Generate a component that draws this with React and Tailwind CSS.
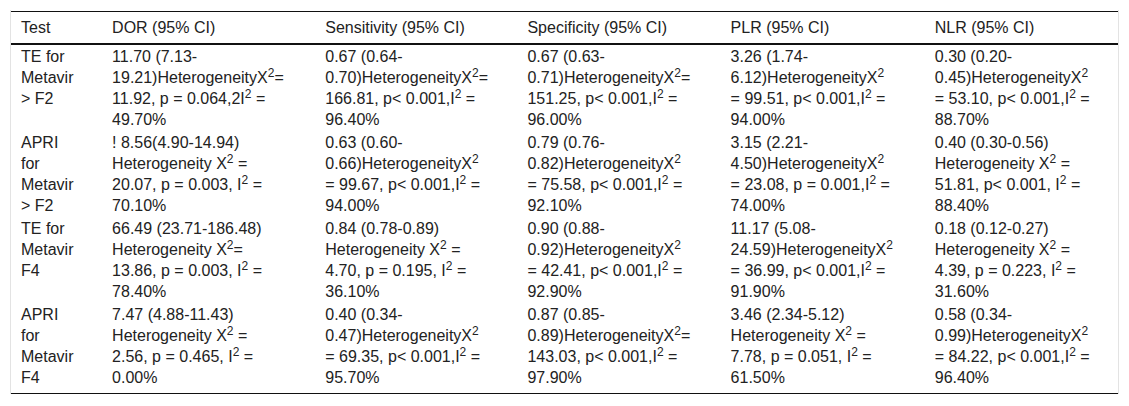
// Diagnostic accuracy table: meta-analysis results per test

const COLUMNS = [
  { label: "Test", width: "w-[91px]" },
  { label: "DOR (95% CI)", width: "w-[213px]" },
  { label: "Sensitivity (95% CI)", width: "w-[202px]" },
  { label: "Specificity (95% CI)", width: "w-[203px]" },
  { label: "PLR (95% CI)", width: "w-[204px]" },
  { label: "NLR (95% CI)", width: "w-[193px]" },
];

// each cell is a list of lines; "^2" becomes a superscript 2
const ROWS = [
  [
    ["TE for", "Metavir", "> F2"],
    ["11.70 (7.13-", "19.21)HeterogeneityX^2=", "11.92, p = 0.064,2I^2 =", "49.70%"],
    ["0.67 (0.64-", "0.70)HeterogeneityX^2=", "166.81, p< 0.001,I^2 =", "96.40%"],
    ["0.67 (0.63-", "0.71)HeterogeneityX^2=", "151.25, p< 0.001,I^2 =", "96.00%"],
    ["3.26 (1.74-", "6.12)HeterogeneityX^2", "= 99.51, p< 0.001,I^2 =", "94.00%"],
    ["0.30 (0.20-", "0.45)HeterogeneityX^2", "= 53.10, p< 0.001,I^2 =", "88.70%"],
  ],
  [
    ["APRI", "for", "Metavir", "> F2"],
    ["! 8.56(4.90-14.94)", "Heterogeneity X^2 =", "20.07, p = 0.003, I^2 =", "70.10%"],
    ["0.63 (0.60-", "0.66)HeterogeneityX^2", "= 99.67, p< 0.001,I^2 =", "94.00%"],
    ["0.79 (0.76-", "0.82)HeterogeneityX^2", "= 75.58, p< 0.001,I^2 =", "92.10%"],
    ["3.15 (2.21-", "4.50)HeterogeneityX^2", "= 23.08, p = 0.001,I^2 =", "74.00%"],
    ["0.40 (0.30-0.56)", "Heterogeneity X^2 =", "51.81, p< 0.001, I^2 =", "88.40%"],
  ],
  [
    ["TE for", "Metavir", "F4"],
    ["66.49 (23.71-186.48)", "Heterogeneity X^2=", "13.86, p = 0.003, I^2 =", "78.40%"],
    ["0.84 (0.78-0.89)", "Heterogeneity X^2 =", "4.70, p = 0.195, I^2 =", "36.10%"],
    ["0.90 (0.88-", "0.92)HeterogeneityX^2", "= 42.41, p< 0.001,I^2 =", "92.90%"],
    ["11.17 (5.08-", "24.59)HeterogeneityX^2", "= 36.99, p< 0.001,I^2 =", "91.90%"],
    ["0.18 (0.12-0.27)", "Heterogeneity X^2 =", "4.39, p = 0.223, I^2 =", "31.60%"],
  ],
  [
    ["APRI", "for", "Metavir", "F4"],
    ["7.47 (4.88-11.43)", "Heterogeneity X^2 =", "2.56, p = 0.465, I^2 =", "0.00%"],
    ["0.40 (0.34-", "0.47)HeterogeneityX^2", "= 69.35, p< 0.001,I^2 =", "95.70%"],
    ["0.87 (0.85-", "0.89)HeterogeneityX^2=", "143.03, p< 0.001,I^2 =", "97.90%"],
    ["3.46 (2.34-5.12)", "Heterogeneity X^2 =", "7.78, p = 0.051, I^2 =", "61.50%"],
    ["0.58 (0.34-", "0.99)HeterogeneityX^2", "= 84.22, p< 0.001,I^2 =", "96.40%"],
  ],
];

function Line({ text }) {
  const parts = text.split("^2");
  return (
    <div className="whitespace-nowrap">
      {parts.map((part, i) => (
        <span key={i}>
          {part}
          {i < parts.length - 1 && <sup>2</sup>}
        </span>
      ))}
    </div>
  );
}

export default function App() {
  return (
    <div className="min-h-[406px] bg-white pt-[10px] font-['Liberation_Sans',Arial,sans-serif] text-[16px] leading-[21px] text-[#222]">
      <div className="ml-[10px] w-[1109px] border-x border-[#e3e3e3] pt-px">
        <table className="w-full table-fixed border-collapse">
          <colgroup>
            {COLUMNS.map((col) => (
              <col key={col.label} className={col.width} />
            ))}
          </colgroup>
          <thead>
            <tr className="border-t border-b-2 border-t-[#111] border-b-[#111]">
              {COLUMNS.map((col) => (
                <th key={col.label} className="pl-[10px] pt-[5px] pb-[5px] text-left font-normal">
                  {col.label}
                </th>
              ))}
            </tr>
          </thead>
          <tbody>
            {ROWS.map((row, r) => (
              <tr key={r} className={r === ROWS.length - 1 ? "border-b border-[#111]" : ""}>
                {row.map((cell, c) => (
                  <td
                    key={c}
                    className={`pl-[10px] pt-px align-top ${r === ROWS.length - 1 ? "pb-[5px]" : "pb-px"}`}
                  >
                    {cell.map((line, i) => (
                      <Line key={i} text={line} />
                    ))}
                  </td>
                ))}
              </tr>
            ))}
          </tbody>
        </table>
      </div>
    </div>
  );
}
